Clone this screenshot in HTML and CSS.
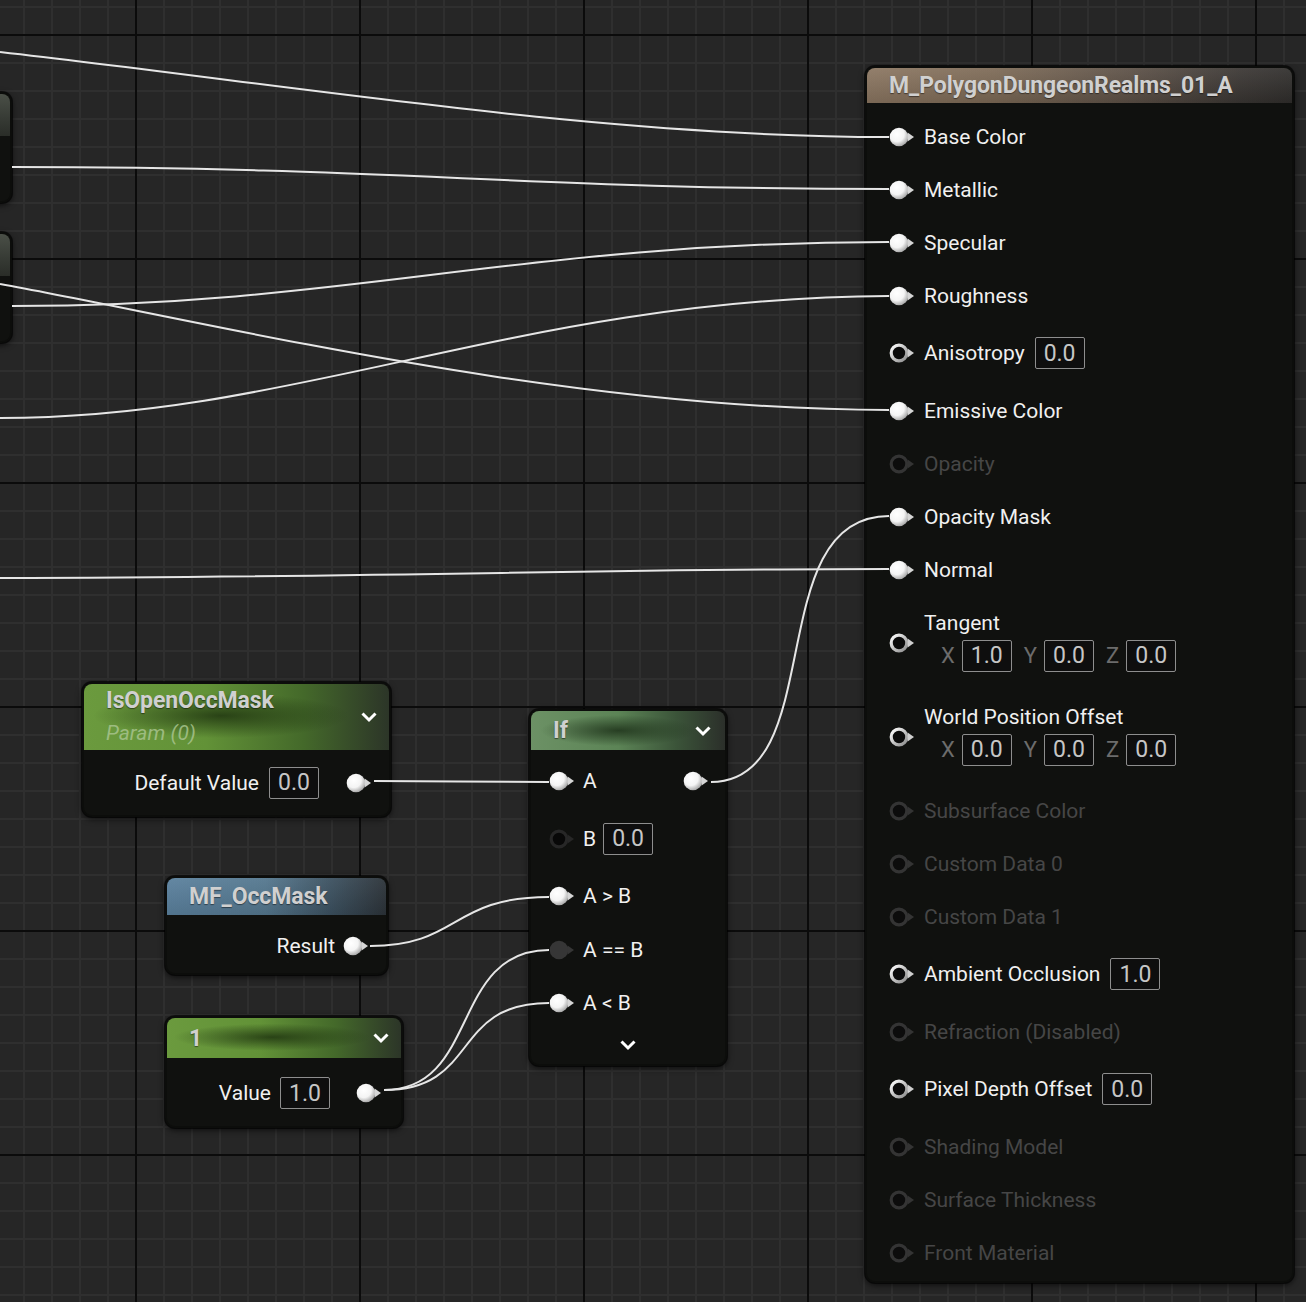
FILE: index.html
```html
<!DOCTYPE html>
<html>
<head>
<meta charset="utf-8">
<title>Material Graph</title>
<link rel="stylesheet" href="styles.css">
</head>
<body>
<div class="canvas">
  <svg class="defs" width="0" height="0" aria-hidden="true">
    <defs>
      <radialGradient id="gOn" cx="38%" cy="35%" r="72%">
        <stop offset="0" stop-color="#ffffff"/>
        <stop offset="0.55" stop-color="#f4f4f4"/>
        <stop offset="1" stop-color="#9a9a9a"/>
      </radialGradient>
      <linearGradient id="gRing" x1="0" y1="0" x2="1" y2="1">
        <stop offset="0" stop-color="#ffffff"/>
        <stop offset="1" stop-color="#8c8c8c"/>
      </linearGradient>
      <symbol id="pin-on" viewBox="0 0 27 20">
        <circle cx="10" cy="10" r="9.3" fill="url(#gOn)"/>
        <path d="M18.6 5.6 L25 10 L18.6 14.4 Z" fill="#d6d6d6"/>
      </symbol>
      <symbol id="pin-ring" viewBox="0 0 27 20">
        <circle cx="10" cy="10" r="7.8" fill="#0b0b0b" stroke="url(#gRing)" stroke-width="3.2"/>
        <path d="M18.6 5.6 L25 10 L18.6 14.4 Z" fill="#cfcfcf"/>
      </symbol>
      <symbol id="pin-off" viewBox="0 0 27 20">
        <circle cx="10" cy="10" r="7.8" fill="#0c0c0c" stroke="#343434" stroke-width="3.2"/>
        <path d="M18.6 5.6 L25 10 L18.6 14.4 Z" fill="#343434"/>
      </symbol>
      <symbol id="pin-dim" viewBox="0 0 27 20">
        <circle cx="10" cy="10" r="7.8" fill="#080808" stroke="#272727" stroke-width="3.2"/>
        <path d="M18.6 5.6 L25 10 L18.6 14.4 Z" fill="#272727"/>
      </symbol>
      <symbol id="pin-grey" viewBox="0 0 27 20">
        <circle cx="10" cy="10" r="9.3" fill="#363636"/>
        <path d="M18.6 5.6 L25 10 L18.6 14.4 Z" fill="#363636"/>
      </symbol>
      <symbol id="chev" viewBox="0 0 18 12">
        <path d="M2.5 2.5 L9 9 L15.5 2.5" fill="none" stroke="#ffffff" stroke-width="3"/>
      </symbol>
    </defs>
  </svg>

  <!-- partial nodes on the left edge -->
  <div class="node stub stub-a"><div class="hdr hdr-grey"></div><div class="body"></div></div>
  <div class="node stub stub-b"><div class="hdr hdr-grey"></div><div class="body"></div></div>

  <!-- main material node -->
  <div class="node main">
    <div class="hdr hdr-brown"><span class="title">M_PolygonDungeonRealms_01_A</span></div>
    <div class="body main-body">
      <div class="row"><svg class="pin"><use href="#pin-on"/></svg><span class="lbl">Base Color</span></div>
      <div class="row"><svg class="pin"><use href="#pin-on"/></svg><span class="lbl">Metallic</span></div>
      <div class="row"><svg class="pin"><use href="#pin-on"/></svg><span class="lbl">Specular</span></div>
      <div class="row"><svg class="pin"><use href="#pin-on"/></svg><span class="lbl">Roughness</span></div>
      <div class="row row-box"><svg class="pin"><use href="#pin-ring"/></svg><span class="lbl">Anisotropy</span><span class="box">0.0</span></div>
      <div class="row"><svg class="pin"><use href="#pin-on"/></svg><span class="lbl">Emissive Color</span></div>
      <div class="row off"><svg class="pin"><use href="#pin-off"/></svg><span class="lbl">Opacity</span></div>
      <div class="row"><svg class="pin"><use href="#pin-on"/></svg><span class="lbl">Opacity Mask</span></div>
      <div class="row"><svg class="pin"><use href="#pin-on"/></svg><span class="lbl">Normal</span></div>
      <div class="row row-vec"><svg class="pin"><use href="#pin-ring"/></svg>
        <div class="vec"><span class="lbl">Tangent</span>
          <div class="xyz"><span class="axis">X</span><span class="box">1.0</span><span class="axis">Y</span><span class="box">0.0</span><span class="axis">Z</span><span class="box">0.0</span></div>
        </div>
      </div>
      <div class="row row-vec"><svg class="pin"><use href="#pin-ring"/></svg>
        <div class="vec"><span class="lbl">World Position Offset</span>
          <div class="xyz"><span class="axis">X</span><span class="box">0.0</span><span class="axis">Y</span><span class="box">0.0</span><span class="axis">Z</span><span class="box">0.0</span></div>
        </div>
      </div>
      <div class="row off"><svg class="pin"><use href="#pin-off"/></svg><span class="lbl">Subsurface Color</span></div>
      <div class="row off"><svg class="pin"><use href="#pin-off"/></svg><span class="lbl">Custom Data 0</span></div>
      <div class="row off"><svg class="pin"><use href="#pin-off"/></svg><span class="lbl">Custom Data 1</span></div>
      <div class="row row-box"><svg class="pin"><use href="#pin-ring"/></svg><span class="lbl">Ambient Occlusion</span><span class="box">1.0</span></div>
      <div class="row off"><svg class="pin"><use href="#pin-off"/></svg><span class="lbl">Refraction (Disabled)</span></div>
      <div class="row row-box"><svg class="pin"><use href="#pin-ring"/></svg><span class="lbl">Pixel Depth Offset</span><span class="box">0.0</span></div>
      <div class="row off"><svg class="pin"><use href="#pin-off"/></svg><span class="lbl">Shading Model</span></div>
      <div class="row off"><svg class="pin"><use href="#pin-off"/></svg><span class="lbl">Surface Thickness</span></div>
      <div class="row off"><svg class="pin"><use href="#pin-off"/></svg><span class="lbl">Front Material</span></div>
    </div>
  </div>

  <!-- parameter node -->
  <div class="node param">
    <div class="hdr hdr-green hdr-tall">
      <div class="titles"><span class="title">IsOpenOccMask</span><span class="sub">Param (0)</span></div>
      <svg class="chev"><use href="#chev"/></svg>
    </div>
    <div class="body small-body">
      <div class="row out-row"><span class="lbl">Default Value</span><span class="box">0.0</span><svg class="pin out"><use href="#pin-on"/></svg></div>
    </div>
  </div>

  <!-- If node -->
  <div class="node ifnode">
    <div class="hdr hdr-if"><span class="title">If</span><svg class="chev"><use href="#chev"/></svg></div>
    <div class="body if-body">
      <div class="row if-a"><svg class="pin"><use href="#pin-on"/></svg><span class="lbl">A</span><svg class="pin out push"><use href="#pin-on"/></svg></div>
      <div class="row if-b"><svg class="pin"><use href="#pin-dim"/></svg><span class="lbl">B</span><span class="box">0.0</span></div>
      <div class="row if-c"><svg class="pin"><use href="#pin-on"/></svg><span class="lbl">A &gt; B</span></div>
      <div class="row if-d"><svg class="pin"><use href="#pin-grey"/></svg><span class="lbl">A == B</span></div>
      <div class="row if-d"><svg class="pin"><use href="#pin-on"/></svg><span class="lbl">A &lt; B</span></div>
      <div class="more"><svg class="chev"><use href="#chev"/></svg></div>
    </div>
  </div>

  <!-- material function node -->
  <div class="node mf">
    <div class="hdr hdr-blue"><span class="title">MF_OccMask</span></div>
    <div class="body mf-body">
      <div class="row out-row"><span class="lbl">Result</span><svg class="pin out"><use href="#pin-on"/></svg></div>
    </div>
  </div>

  <!-- constant node -->
  <div class="node const">
    <div class="hdr hdr-green hdr-const"><span class="title">1</span><svg class="chev"><use href="#chev"/></svg></div>
    <div class="body const-body">
      <div class="row out-row"><span class="lbl">Value</span><span class="box">1.0</span><svg class="pin out"><use href="#pin-on"/></svg></div>
    </div>
  </div>

  <!-- wires -->
  <svg class="wires" width="1306" height="1302" viewBox="0 0 1306 1302">
    <g fill="none" stroke="#e6e6e6" stroke-width="2">
      <path d="M0 52 C300 86, 600 137, 889 137"/>
      <path d="M12 167 C400 167, 520 189, 889 189"/>
      <path d="M12 306 C350 306, 520 242, 889 242"/>
      <path d="M0 284 C200 320, 560 410, 889 410"/>
      <path d="M0 418 C300 418, 520 298, 889 296"/>
      <path d="M0 578 C400 577, 600 569, 889 569"/>
      <path d="M711 782 C830 782, 760 516, 889 516"/>
      <path d="M374 781 C450 781, 470 782, 549 782"/>
      <path d="M370 946 C460 946, 450 897, 549 897"/>
      <path d="M384 1090 C480 1090, 450 950, 549 950"/>
      <path d="M384 1090 C480 1090, 450 1003, 549 1003"/>
    </g>
  </svg>
</div>
</body>
</html>
```

FILE: styles.css
```css
* { box-sizing: border-box; }

body {
  margin: 0;
  background: #262626;
  overflow: hidden;
  font-family: Roboto, "Noto Sans", "Liberation Sans", sans-serif;
}

.canvas {
  position: relative;
  width: 1306px;
  height: 1302px;
  overflow: hidden;
  background-color: #262626;
  background-image:
    linear-gradient(to right, #0b0b0b 2px, transparent 2px),
    linear-gradient(to bottom, #0b0b0b 2px, transparent 2px),
    linear-gradient(to right, #2f2f2f 2px, transparent 2px),
    linear-gradient(to bottom, #2f2f2f 2px, transparent 2px);
  background-size: 224px 224px, 224px 224px, 28px 28px, 28px 28px;
  background-position: 135px 34px, 135px 34px, 23px 6px, 23px 6px;
}

.defs { position: absolute; width: 0; height: 0; }

.wires {
  position: absolute;
  left: 0;
  top: 0;
  z-index: 5;
  pointer-events: none;
}

/* ---------- nodes ---------- */
.node {
  position: absolute;
  z-index: 2;
  display: flex;
  flex-direction: column;
  padding: 2px;
  border-radius: 10px;
  background: #0c0d0b;
  box-shadow: 0 2px 6px rgba(0, 0, 0, 0.7), 0 0 0 1px rgba(0, 0, 0, 0.6);
}

.hdr {
  display: flex;
  align-items: center;
  justify-content: space-between;
  border-radius: 8px 8px 0 0;
  color: #cfcfcf;
  position: relative;
}

.title {
  font-weight: 700;
  font-size: 23px;
  letter-spacing: -0.1px;
  color: #d0d0d0;
  text-shadow: 0 1px 1px rgba(0, 0, 0, 0.45);
}

.body {
  flex: 1;
  display: flex;
  flex-direction: column;
  border-radius: 0 0 8px 8px;
  background: rgba(17, 18, 16, 0.94);
}

.row {
  display: flex;
  align-items: center;
  flex-shrink: 0;
}

.lbl {
  font-size: 21px;
  color: #f0f0f0;
  white-space: nowrap;
}

.pin {
  width: 27px;
  height: 20px;
  flex-shrink: 0;
}

.box {
  display: inline-flex;
  align-items: center;
  justify-content: center;
  height: 32px;
  min-width: 50px;
  padding: 0 6px;
  border: 1.5px solid #8e8e8e;
  border-radius: 2px;
  font-size: 23px;
  color: #c6c6c6;
  background: #0e0e0e;
  flex-shrink: 0;
}

.chev {
  width: 18px;
  height: 12px;
  flex-shrink: 0;
}

/* header colours */
.hdr-brown {
  height: 35px;
  padding-left: 22px;
  background:
    linear-gradient(to bottom, rgba(255, 255, 255, 0.07), rgba(0, 0, 0, 0.12)),
    linear-gradient(to right, #8b7661 0%, #7d6a56 30%, #5c5046 62%, #3a3633 88%, #302e2c 100%);
}

.hdr-green {
  background:
    radial-gradient(ellipse 42% 34% at 45% 48%, rgba(28, 48, 14, 0.8), rgba(28, 48, 14, 0) 100%),
    linear-gradient(to right, #6b9a3e 0%, #629237 40%, #44692a 72%, #2c3528 100%);
}

.hdr-if {
  height: 39px;
  padding: 0 13px 0 22px;
  background:
    radial-gradient(ellipse 40% 40% at 45% 50%, rgba(30, 50, 26, 0.85), rgba(30, 50, 26, 0) 100%),
    linear-gradient(to right, #6c9165 0%, #5c8456 45%, #3b5439 75%, #2b2f2a 100%);
}

.hdr-blue {
  height: 37px;
  padding-left: 22px;
  background:
    linear-gradient(to bottom, rgba(255, 255, 255, 0.05), rgba(0, 0, 0, 0.1)),
    linear-gradient(to right, #5b819e 0%, #55788f 45%, #3c5160 75%, #2c3339 100%);
}

.hdr-grey {
  height: 42px;
  background: linear-gradient(to bottom, #4a4f47 0%, #363a34 60%, #2a2d28 100%);
}

/* ---------- stubs ---------- */
.stub { width: 302px; left: -290px; }
.stub-a { top: 92px; height: 111px; }
.stub-b { top: 232px; height: 111px; }

/* ---------- main node ---------- */
.main {
  left: 865px;
  top: 66px;
  width: 429px;
  height: 1217px;
}

.main-body { padding-top: 7px; }
.main-body .row { height: 53px; padding-left: 22px; gap: 8px; }
.main-body .row-box { height: 62px; }
.main-body .row-box .box { margin-left: 2px; }
.main-body .row-vec { height: 94px; }
.off .lbl { color: #464646; }

.vec {
  display: flex;
  flex-direction: column;
  gap: 5px;
  margin-bottom: 4px;
}

.xyz {
  display: flex;
  align-items: center;
  padding-left: 17px;
}

.axis {
  font-size: 22px;
  color: #6c6c6c;
  margin-right: 7px;
}

.xyz .box + .axis { margin-left: 12px; }

/* ---------- parameter node ---------- */
.param {
  left: 82px;
  top: 682px;
  width: 309px;
  height: 135px;
}

.hdr-tall {
  height: 66px;
  padding: 0 11px 0 22px;
}

.titles {
  display: flex;
  flex-direction: column;
  line-height: 32px;
}

.sub {
  font-style: italic;
  font-size: 21px;
  color: #a7c38d;
  opacity: 0.85;
}

.small-body { justify-content: center; }

.out-row {
  justify-content: flex-end;
  padding-right: 16px;
}

.param .out-row .lbl { margin-right: 10px; }
.param .out-row .pin { margin-left: 27px; }

/* ---------- If node ---------- */
.ifnode {
  left: 529px;
  top: 709px;
  width: 198px;
  height: 357px;
}

.if-body { padding-top: 4px; }
.if-body .row { padding-left: 18px; padding-right: 15px; gap: 7px; }
.if-a { height: 54px; }
.if-b { height: 61px; }
.if-c { height: 54px; }
.if-d { height: 53px; }
.if-b .box { margin-left: 0; }
.push { margin-left: auto; }

.more {
  height: 32px;
  display: flex;
  align-items: center;
  justify-content: center;
}

/* ---------- MF node ---------- */
.mf {
  left: 165px;
  top: 876px;
  width: 223px;
  height: 99px;
}

.mf-body { padding-top: 6px; }
.mf-body .row { height: 50px; }
.mf .out-row .pin { margin-left: 8px; }

/* ---------- constant node ---------- */
.const {
  left: 165px;
  top: 1016px;
  width: 238px;
  height: 112px;
}

.hdr-const {
  height: 40px;
  padding: 0 11px 0 22px;
}

.const-body { justify-content: center; padding-top: 2px; }
.const .out-row { height: 50px; padding-right: 18px; }
.const .out-row .lbl { margin-right: 9px; }
.const .out-row .pin { margin-left: 26px; }
```
